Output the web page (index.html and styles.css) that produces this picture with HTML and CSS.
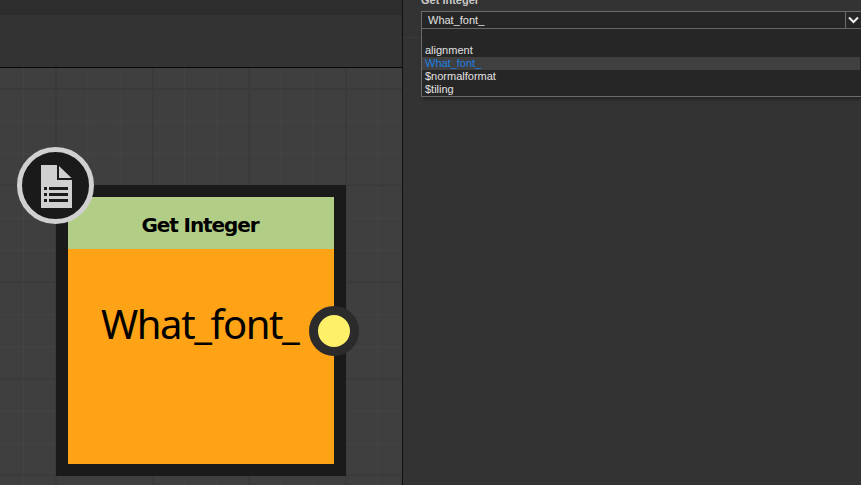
FILE: index.html
```html
<!DOCTYPE html>
<html lang="en">
<head>
<meta charset="utf-8">
<title>Get Integer</title>
<link rel="stylesheet" href="styles.css">
</head>
<body>
<div class="app">
  <section class="editor">
    <div class="topbar"></div>
    <div class="toolbar"></div>
    <div class="canvas">
      <div class="node">
        <div class="node-inner">
          <div class="node-title">Get Integer</div>
          <div class="node-body"><span>What_font_</span></div>
        </div>
        <div class="node-icon">
          <svg width="36" height="44" viewBox="0 0 36 44">
            <path class="doc" d="M3 1H19V16H34V44H3Z"/>
            <path class="doc" d="M21 2L33.500 14H21Z"/>
            <path class="cut" d="M6 23H9V26H6ZM11 23H30V26H11ZM6 29H9V32H6ZM11 29H30V32H11ZM6 35H9V38H6ZM11 35H30V38H11Z"/>
          </svg>
        </div>
        <div class="port"></div>
      </div>
    </div>
  </section>
  <aside class="panel">
    <div class="panel-title">Get Integer</div>
    <div class="combo">
      <div class="combo-head">
        <span class="combo-value">What_font_</span>
        <span class="combo-btn">
          <svg width="11" height="8" viewBox="0 0 11 8"><path d="M1 1.500L5.500 6L10 1.500"/></svg>
        </span>
      </div>
      <ul class="combo-list">
        <li class="blank">&nbsp;</li>
        <li>alignment</li>
        <li class="selected">What_font_</li>
        <li>$normalformat</li>
        <li>$tiling</li>
      </ul>
    </div>
  </aside>
</div>
</body>
</html>
```
FILE: styles.css
```css
* { box-sizing: border-box; }
html, body { margin: 0; height: 100%; }
body {
  background: #333333;
  overflow: hidden;
  font-family: "Liberation Sans", Arial, sans-serif;
}
.app { display: flex; width: 861px; height: 485px; overflow: hidden; }
.editor {
  width: 403px;
  flex: none;
  display: flex;
  flex-direction: column;
  border-right: 1px solid #111111;
}
.topbar { height: 15px; background: #2d2d2d; flex: none; }
.toolbar { height: 52px; background: #333333; flex: none; }
.canvas {
  flex: 1;
  border-top: 1px solid #0a0a0a;
  padding: 117px 0 0 56px;
  background-color: #3f3f3f;
  background-image:
    linear-gradient(90deg, #3a3a3a 2px, transparent 2px),
    linear-gradient(#3a3a3a 2px, transparent 2px),
    linear-gradient(90deg, #444444 1px, transparent 1px),
    linear-gradient(#444444 1px, transparent 1px);
  background-size: 96.600px 96.600px, 96.600px 96.600px, 32.200px 32.200px, 32.200px 32.200px;
  background-position: 55px 20px, 55px 20px, 23px 21px, 23px 21px;
}
.node {
  position: relative;
  width: 290px;
  height: 291px;
  background: #1a1a1a;
  padding: 12px;
}
.node-inner { height: 100%; display: flex; flex-direction: column; }
.node-title {
  height: 52px;
  flex: none;
  background: #b2cd86;
  color: #000;
  font-family: "DejaVu Sans", sans-serif;
  font-size: 20px;
  font-weight: 700;
  letter-spacing: -1.100px;
  padding: 4px 2px 0 0;
  display: flex;
  align-items: center;
  justify-content: center;
}
.node-body {
  flex: 1;
  background: #ffa316;
  color: #000;
  font-family: "Noto Sans", sans-serif;
  font-size: 40px;
  letter-spacing: -1.400px;
  padding: 49px 0 0 33px;
  line-height: 52px;
}
.node-icon {
  position: absolute;
  left: -39px;
  top: -38px;
  width: 77px;
  height: 77px;
  border-radius: 50%;
  background: #1a1a1a;
  border: 5px solid #d0d0d0;
  display: flex;
  align-items: center;
  justify-content: center;
}
.doc { fill: #d0d0d0; }
.cut { fill: #1a1a1a; }
.port {
  position: absolute;
  left: 253px;
  top: 121px;
  width: 50px;
  height: 50px;
  border-radius: 50%;
  background: #fff06a;
  border: 9px solid #2b2b2b;
}
.panel { flex: 1; padding: 0 0 0 18px; min-width: 0; position: relative; }
.panel::before {
  content: "";
  position: absolute;
  left: 0;
  right: 0;
  top: 37px;
  height: 1px;
  background: #3b3b3b;
}
.panel-title {
  height: 11px;
  color: #c8c8c8;
  font-size: 11px;
  font-weight: 700;
  line-height: 11px;
  margin-top: -5px;
  margin-bottom: 5px;
}
.combo { font-size: 11px; color: #e2e2e2; position: relative; }
.combo-head {
  height: 18px;
  display: flex;
  align-items: center;
  justify-content: space-between;
  background: #262626;
  border: 1px solid #6b6b6b;
  border-right: 0;
}
.combo-value { padding-left: 6px; }
.combo-btn {
  width: 16px;
  height: 16px;
  border-left: 1px solid #6b6b6b;
  display: flex;
  align-items: center;
  justify-content: center;
}
.combo-btn path { fill: none; stroke: #f0f0f0; stroke-width: 2; }
.combo-list {
  list-style: none;
  margin: 0;
  padding: 2px 0 0 0;
  height: 68px;
  background: #262626;
  border: 1px solid #6b6b6b;
  border-top: 0;
  border-right: 0;
  box-shadow: 2px 2px 4px rgba(0,0,0,.35);
}
.combo-list li { height: 13px; line-height: 13px; padding-left: 3px; margin-right: 1px; }
.combo-list .selected { background: #404040; color: #1e7fe0; }
```
